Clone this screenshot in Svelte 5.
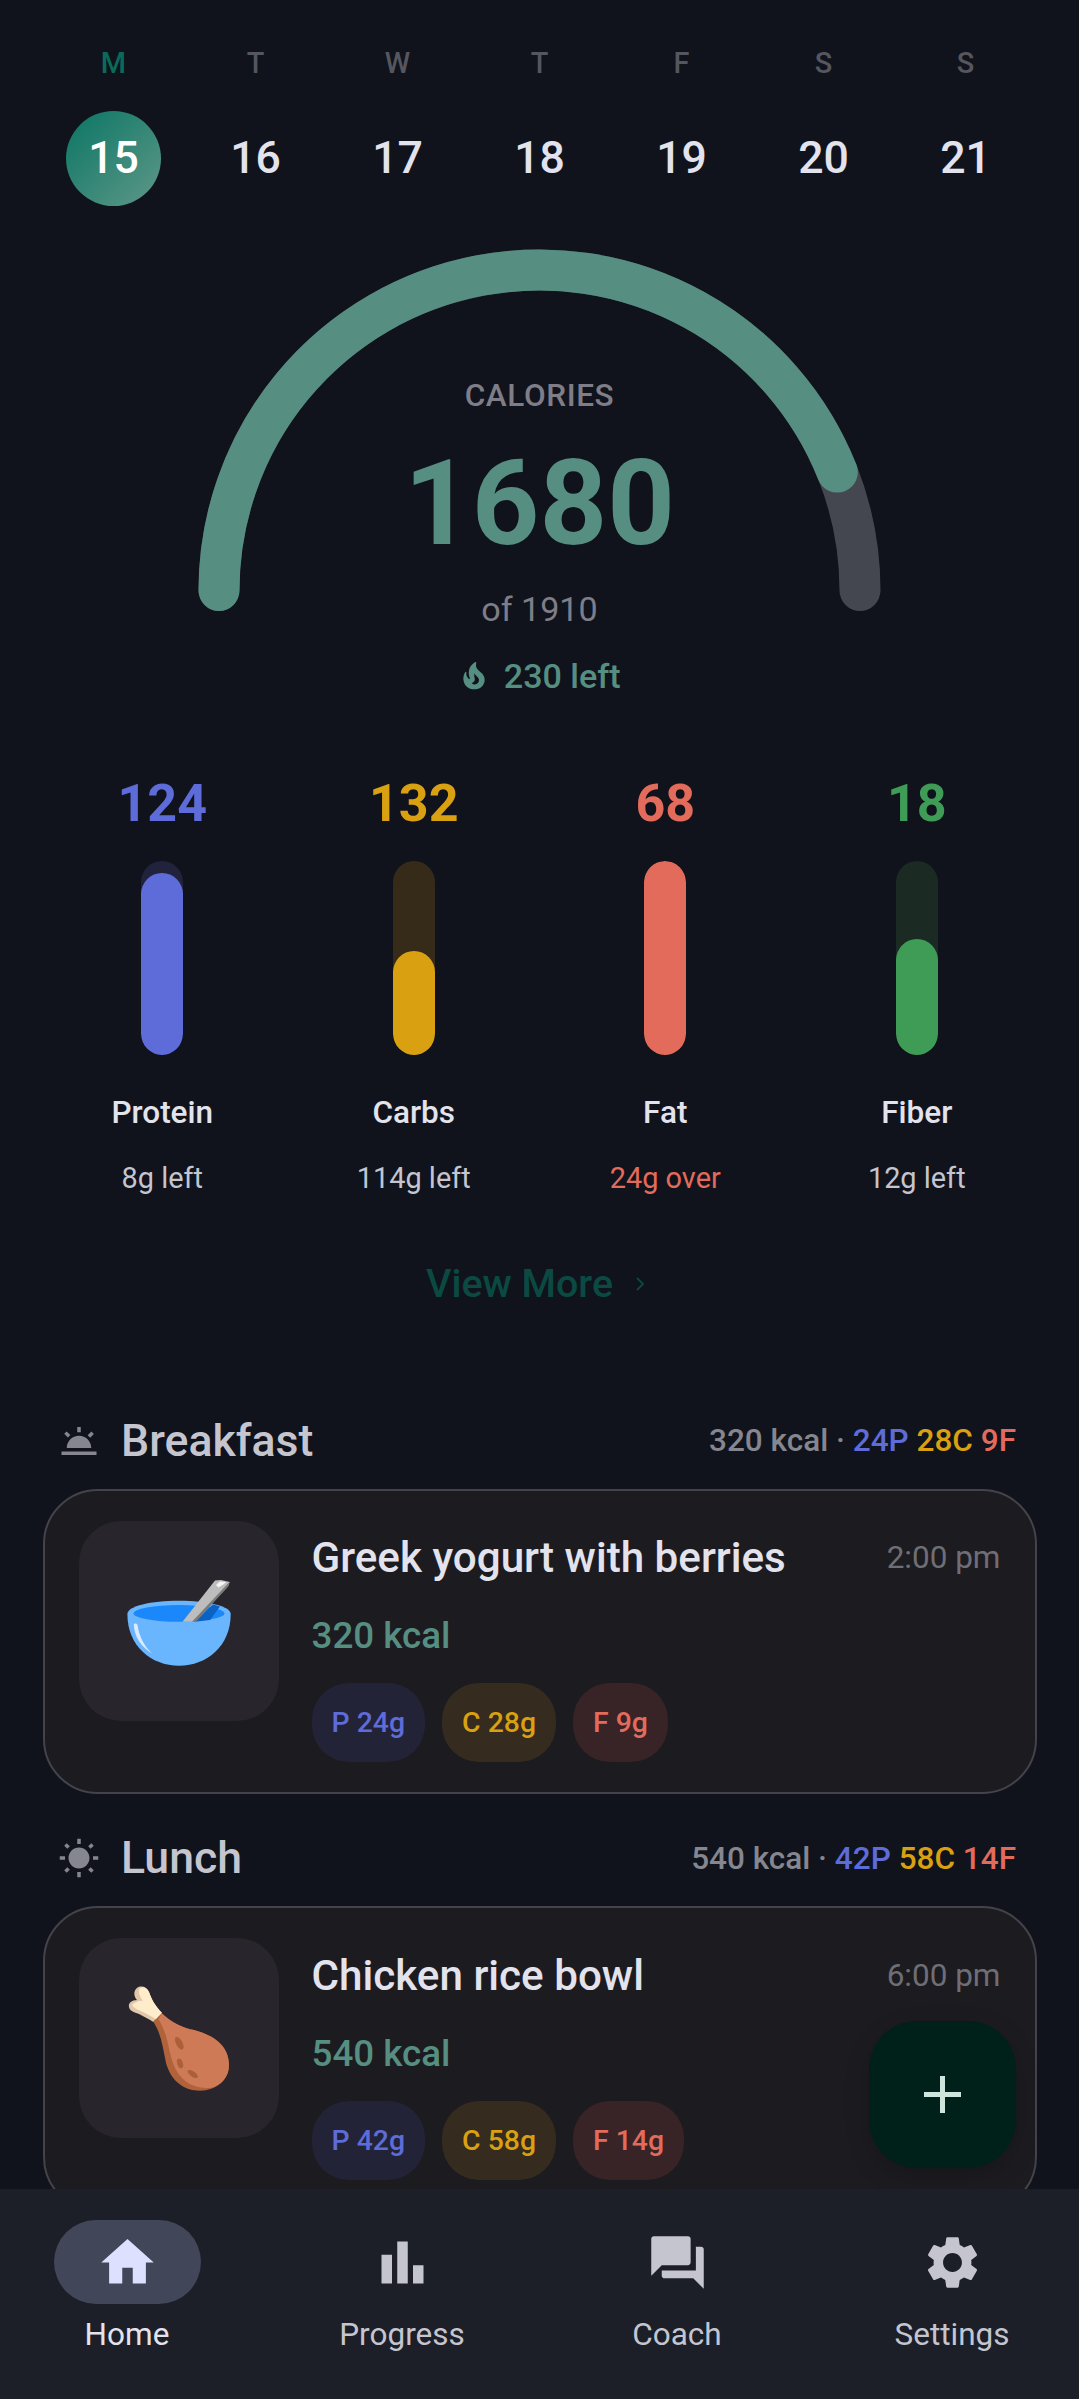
<script lang="ts">
	const days = [
		{ label: 'M', num: 15, today: true },
		{ label: 'T', num: 16 },
		{ label: 'W', num: 17 },
		{ label: 'T', num: 18 },
		{ label: 'F', num: 19 },
		{ label: 'S', num: 20 },
		{ label: 'S', num: 21 }
	];

	const macros = [
		{ key: 'protein', value: 124, name: 'Protein', note: '8g left', fill: 94 },
		{ key: 'carbs', value: 132, name: 'Carbs', note: '114g left', fill: 53.6 },
		{ key: 'fat', value: 68, name: 'Fat', note: '24g over', fill: 100, over: true },
		{ key: 'fiber', value: 18, name: 'Fiber', note: '12g left', fill: 60 }
	];

	const meals = [
		{
			slot: 'Breakfast',
			kcal: 320,
			p: 24,
			c: 28,
			f: 9,
			title: 'Greek yogurt with berries',
			time: '2:00 pm',
			icon: 'bowl'
		},
		{
			slot: 'Lunch',
			kcal: 540,
			p: 42,
			c: 58,
			f: 14,
			title: 'Chicken rice bowl',
			time: '6:00 pm',
			icon: 'leg'
		}
	];

	const tabs = [
		{ name: 'Home', active: true, d: 'M10 20v-6h4v6h5v-8h3L12 3 2 12h3v8z' },
		{ name: 'Progress', d: 'M4 9h4v11H4zm12 4h4v7h-4zm-6-9h4v16h-4z' },
		{
			name: 'Coach',
			d: 'M21 6h-2v9H6v2c0 .55.45 1 1 1h11l4 4V7c0-.55-.45-1-1-1zm-4 6V3c0-.55-.45-1-1-1H3c-.55 0-1 .45-1 1v14l4-4h10c.55 0 1-.45 1-1z'
		},
		{
			name: 'Settings',
			d: 'M19.14 12.94c.04-.3.06-.61.06-.94 0-.32-.02-.64-.07-.94l2.03-1.58c.18-.14.23-.41.12-.61l-1.92-3.32c-.12-.22-.37-.29-.59-.22l-2.39.96c-.5-.38-1.03-.7-1.62-.94l-.36-2.54c-.04-.24-.24-.41-.48-.41h-3.84c-.24 0-.43.17-.47.41l-.36 2.54c-.59.24-1.13.57-1.62.94l-2.39-.96c-.22-.08-.47 0-.59.22L2.74 8.87c-.12.21-.08.47.12.61l2.03 1.58c-.05.3-.09.63-.09.94s.02.64.07.94l-2.03 1.58c-.18.14-.23.41-.12.61l1.92 3.32c.12.22.37.29.59.22l2.39-.96c.5.38 1.03.7 1.62.94l.36 2.54c.05.24.24.41.48.41h3.84c.24 0 .44-.17.47-.41l.36-2.54c.59-.24 1.13-.56 1.62-.94l2.39.96c.22.08.47 0 .59-.22l1.92-3.32c.12-.22.07-.47-.12-.61l-2.01-1.58zM12 15.6c-1.98 0-3.6-1.62-3.6-3.6s1.62-3.6 3.6-3.6 3.6 1.62 3.6 3.6-1.62 3.6-3.6 3.6z'
		}
	];

	// gauge: half circle, progress share of 180deg
	const r = 320.5;
	const cx = 341.5;
	const cy = 341.5;
	const angle = Math.PI * (1 - 1680 / 1910);
	const endX = cx + r * Math.cos(angle);
	const endY = cy - r * Math.sin(angle);
</script>

<div class="screen">
	<main class="scroll">
		<div class="days">
			{#each days as day}
				<div class="day">
					<span class="day-label" class:today={day.today}>{day.label}</span>
					<span class="day-num" class:today={day.today}>{day.num}</span>
				</div>
			{/each}
		</div>

		<section class="gauge">
			<svg class="arc" width="683" height="363" viewBox="0 0 683 363" aria-hidden="true">
				<path
					d="M{cx - r} {cy} A{r} {r} 0 0 1 {cx + r} {cy}"
					fill="none"
					stroke="#44474f"
					stroke-width="41"
					stroke-linecap="round"
				/>
				<path
					d="M{cx - r} {cy} A{r} {r} 0 0 1 {endX} {endY}"
					fill="none"
					stroke="#568f82"
					stroke-width="41"
					stroke-linecap="round"
				/>
			</svg>
			<div class="gauge-text">
				<span class="cal-label">CALORIES</span>
				<span class="cal-value">1680</span>
				<span class="cal-of">of 1910</span>
				<span class="cal-left">
					<svg width="32" height="32" viewBox="0 0 24 24" aria-hidden="true">
						<path
							fill-rule="evenodd"
							d="M19.48 12.35c-1.57-4.08-7.16-4.3-5.81-10.23.1-.44-.37-.78-.75-.55C9.29 3.71 6.68 8 8.87 13.62c.18.46-.36.89-.75.59-1.81-1.37-2-3.34-1.84-4.75.06-.52-.62-.77-.91-.34C4.69 10.16 4 11.84 4 14.37c.38 5.6 5.11 7.32 6.81 7.54 2.43.31 5.06-.14 6.95-1.87 2.08-1.93 2.84-5.01 1.72-7.69zM10.2 17.38c1.44-.35 2.18-1.39 2.38-2.31.33-1.43-.96-2.83-.09-5.09.33 1.87 3.27 3.04 3.27 5.08.08 2.53-2.66 4.7-5.56 2.32z"
						/>
					</svg>
					230 left
				</span>
			</div>
		</section>

		<section class="macros">
			{#each macros as m}
				<div class="macro {m.key}">
					<span class="macro-value">{m.value}</span>
					<div class="bar">
						<div class="bar-fill" style="height: {m.fill}%"></div>
					</div>
					<span class="macro-name">{m.name}</span>
					<span class="macro-note" class:over={m.over}>{m.note}</span>
				</div>
			{/each}
		</section>

		<div class="view-more">
			View More
			<svg width="10" height="16" viewBox="0 0 10 16" aria-hidden="true">
				<path d="M2 2l6 6-6 6" fill="none" stroke="currentColor" stroke-width="1.8" />
			</svg>
		</div>

		{#each meals as meal}
			<header class="meal-head">
				<div class="slot">
					{#if meal.icon === 'bowl'}
						<svg class="slot-icon" viewBox="0 0 24 24" aria-hidden="true">
							<path
								d="M16.955 8.662l2.12-2.122 1.416 1.414-2.121 2.122zM2 18h20v2H2zM11 4h2v3h-2zM3.543 7.925l1.414-1.414 2.121 2.121-1.414 1.414zM5 16h14c0-3.87-3.13-7-7-7s-7 3.13-7 7z"
							/>
						</svg>
					{:else}
						<svg class="slot-icon" viewBox="0 0 24 24" aria-hidden="true">
							<path
								d="M6.76 5.34l-1.8-1.79-1.41 1.41 1.79 1.79 1.42-1.41zM4 11H1v2h3v-2zm9-10h-2v3h2V1zm7.45 3.96l-1.41-1.41-1.79 1.79 1.41 1.41 1.79-1.79zM17.24 18.66l1.79 1.8 1.41-1.41-1.8-1.79-1.4 1.4zM20 11v2h3v-2h-3zm-8-5c-3.31 0-6 2.69-6 6s2.69 6 6 6 6-2.69 6-6-2.69-6-6-6zm-1 17h2v-3h-2v3zm-7.45-3.96l1.41 1.41 1.79-1.8-1.41-1.41-1.79 1.8z"
							/>
						</svg>
					{/if}
					<h2>{meal.slot}</h2>
				</div>
				<p class="summary">
					{meal.kcal} kcal ·
					<span class="c-protein">{meal.p}P</span>
					<span class="c-carbs">{meal.c}C</span>
					<span class="c-fat">{meal.f}F</span>
				</p>
			</header>

			<article class="card">
				<div class="thumb">
					{#if meal.icon === 'bowl'}
						<svg width="200" height="200" viewBox="0 0 200 200" aria-hidden="true">
							<path
								d="M48.4 93C48.4 125 72 144.7 100 144.7S151.7 125 151.7 93C151.7 85 128 79.7 100 79.7S48.4 85 48.4 93Z"
								fill="#69b6fe"
							/>
							<ellipse cx="100" cy="92.4" rx="45.5" ry="8.4" fill="#1a87fa" />
							<path d="M115.6 100.7L134 83.6 141 85.5 131 99Z" fill="#0a62c4" />
							<path d="M103.5 100.7L136 59.5 142 59 150.7 61 149 65.5 115.6 100.7Z" fill="#bdbdbd" />
							<path d="M149 62.5L150.7 61 149 65.5 117 100.7 113 100.7Z" fill="#7a7a7a" />
							<path d="M137 64L141 60.5 147 61 145 63 139.5 66.5Z" fill="#f5f5f5" />
							<path d="M54.8 103C56 102 58 102.5 58.5 104C60 115 65 125 73 132.5 62 126 55 115 54.8 103Z" fill="#d9ecff" />
						</svg>
					{:else}
						<svg width="200" height="200" viewBox="0 0 200 200" aria-hidden="true">
							<path
								d="M83 75C76 68 72 60 70 54C68 49 62 47 58 50C54 53 55 59 58 62C53 62 49 65 50 69C50.5 73 55 74 60 76C64 78 70 81 74.3 84Z"
								fill="#e2c7ab"
							/>
							<path
								d="M83 75C76 68 72 60 70 54C68 49 63 48 60.5 51C59 54 61 59 64 63C61 62 56 64 53 67C54 70 60 72 64 74C68 76 74 79 78 82Z"
								fill="#ffecca"
							/>
							<path
								d="M82.7 75.3C92 84 100 88 111 91.3C130 95 150 105 150 127C150 142 137 152.7 121 152.7C105 152.7 92 143 87 125C84 110 82 95 74.3 83.7Z"
								fill="#b0623a"
							/>
							<path
								d="M82.7 75.3C92 84 100 88 111 91.3C130 95 150 105 150 127C150 139 142 148 131 150C118 151 105 146 97 132C91 120 90 108 87 98C85 92 83 87 79.5 81.5Z"
								fill="#cf7a56"
							/>
							<ellipse cx="100.3" cy="105.3" rx="7" ry="3.2" transform="rotate(62 100.3 105.3)" fill="#ac6037" />
							<ellipse cx="101" cy="125.3" rx="5" ry="2.8" transform="rotate(72 101 125.3)" fill="#ac6037" />
							<ellipse cx="113.7" cy="136" rx="6" ry="2.6" transform="rotate(35 113.7 136)" fill="#ac6037" />
						</svg>
					{/if}
				</div>
				<div class="body">
					<div class="title-row">
						<h3>{meal.title}</h3>
						<span class="time">{meal.time}</span>
					</div>
					<div class="kcal">{meal.kcal} kcal</div>
					<div class="chips">
						<span class="chip protein">P {meal.p}g</span>
						<span class="chip carbs">C {meal.c}g</span>
						<span class="chip fat">F {meal.f}g</span>
					</div>
				</div>
			</article>
		{/each}
	</main>

	<button class="fab" aria-label="Add">
		<svg width="37" height="37" viewBox="0 0 37 37" aria-hidden="true">
			<path d="M16 0h5v16h16v5H21v16h-5V21H0v-5h16z" fill="#cfe5dc" />
		</svg>
	</button>

	<nav class="nav">
		{#each tabs as tab}
			<div class="tab" class:active={tab.active}>
				<span class="pill">
					<svg width="63" height="63" viewBox="0 0 24 24" aria-hidden="true">
						<path d={tab.d} />
					</svg>
				</span>
				<span class="tab-name">{tab.name}</span>
			</div>
		{/each}
	</nav>
</div>

<style>
	:global(body) {
		background: #10131b;
	}

	.screen {
		position: relative;
		display: flex;
		flex-direction: column;
		width: 1079px;
		height: 2399px;
		overflow: hidden;
		background: #10131b;
		font-family: Roboto, sans-serif;
		color: #e3e3ee;
	}

	.scroll {
		flex: 1;
		min-height: 0;
		overflow: hidden;
	}

	/* week strip */
	.days {
		display: grid;
		grid-template-columns: repeat(7, 142px);
		padding: 44px 42.5px 0;
	}

	.day {
		display: flex;
		flex-direction: column;
		align-items: center;
	}

	.day-label {
		font-size: 28.9px;
		line-height: 38px;
		font-weight: 500;
		color: #55565f;
	}

	.day-label.today {
		color: #0a6b5a;
	}

	.day-num {
		display: flex;
		align-items: center;
		justify-content: center;
		box-sizing: border-box;
		width: 95px;
		height: 95px;
		margin-top: 29px;
		padding-bottom: 2px;
		border-radius: 50%;
		font-size: 44.6px;
		font-weight: 500;
	}

	.day-num.today {
		background: linear-gradient(135deg, #0a7563, #5f9889);
		color: #fff;
	}

	/* calorie gauge */
	.gauge {
		display: grid;
		justify-items: center;
		margin-top: 43px;
	}

	.gauge > * {
		grid-area: 1 / 1;
	}

	.gauge-text {
		display: flex;
		flex-direction: column;
		align-items: center;
		padding-top: 127px;
	}

	.cal-label {
		font-size: 31.5px;
		line-height: 40px;
		font-weight: 500;
		letter-spacing: 0.6px;
		color: #7f7e88;
	}

	.cal-value {
		margin-top: 22.5px;
		font-size: 118px;
		line-height: 130px;
		font-weight: 700;
		color: #568f82;
	}

	.cal-of {
		margin-top: 20px;
		font-size: 34.1px;
		line-height: 40px;
		color: #7f7e88;
	}

	.cal-left {
		display: flex;
		align-items: center;
		gap: 13.5px;
		margin-top: 27.5px;
		font-size: 34.1px;
		line-height: 40px;
		font-weight: 500;
		color: #568f82;
	}

	.cal-left svg {
		fill: currentColor;
	}

	/* macro bars */
	.macros {
		display: grid;
		grid-template-columns: repeat(4, 251.5px);
		padding: 0 36.5px;
		margin-top: 77.5px;
	}

	.macro {
		display: flex;
		flex-direction: column;
		align-items: center;
	}

	.macro-value {
		font-size: 52px;
		line-height: 60px;
		font-weight: 700;
		color: var(--tint);
	}

	.bar {
		position: relative;
		width: 42px;
		height: 194px;
		margin-top: 27.5px;
		border-radius: 21px;
		overflow: hidden;
		background: var(--track);
	}

	.bar-fill {
		position: absolute;
		left: 0;
		right: 0;
		bottom: 0;
		border-radius: 21px;
		background: var(--tint);
	}

	.macro-name {
		margin-top: 38px;
		font-size: 31.5px;
		line-height: 40px;
		font-weight: 500;
	}

	.macro-note {
		margin-top: 27px;
		font-size: 28.9px;
		line-height: 36px;
		color: #c5c5d0;
	}

	.macro-note.over {
		color: #e36b5b;
	}

	.protein {
		--tint: #5d6cd9;
		--track: #20233b;
	}

	.carbs {
		--tint: #d9a012;
		--track: #352b18;
	}

	.fat {
		--tint: #e36b5b;
		--track: #3a2420;
	}

	.fiber {
		--tint: #3e9c56;
		--track: #1b2a22;
	}

	.view-more {
		display: flex;
		align-items: center;
		justify-content: center;
		gap: 22px;
		margin-top: 63.5px;
		padding-right: 8px;
		font-size: 39.4px;
		line-height: 48px;
		font-weight: 500;
		color: #0b4a42;
	}

	/* meals */
	.meal-head {
		display: flex;
		align-items: center;
		justify-content: space-between;
		height: 56px;
		margin-top: 36px;
		padding: 0 63px 0 58px;
	}

	.view-more + .meal-head {
		margin-top: 105px;
	}

	.slot {
		display: flex;
		align-items: center;
		gap: 21px;
	}

	.slot-icon {
		width: 42px;
		height: 42px;
		fill: #85868f;
	}

	.slot h2 {
		margin: 0;
		font-size: 44.6px;
		line-height: 56px;
		font-weight: 500;
		color: #c5c5d0;
	}

	.summary {
		margin: 0;
		font-size: 31.5px;
		font-weight: 500;
		color: #85868f;
	}

	.c-protein {
		color: #5d6cd9;
	}

	.c-carbs {
		color: #d9a012;
	}

	.c-fat {
		color: #e36b5b;
	}

	.card {
		display: flex;
		gap: 33px;
		margin: 19px 42.5px 0;
		padding: 30px 34px 30px;
		border: 2px solid #44424a;
		border-radius: 55px;
		background: #1c1b1f;
	}

	.meal-head + .card {
		margin-top: 20px;
	}

	.thumb {
		flex: none;
		width: 200px;
		height: 200px;
		border-radius: 42px;
		background: #28262c;
	}

	.thumb svg {
		display: block;
	}

	.body {
		flex: 1;
		min-width: 0;
		padding-top: 9.7px;
	}

	.title-row {
		display: flex;
		align-items: center;
		justify-content: space-between;
	}

	.title-row h3 {
		margin: 0;
		font-size: 42.2px;
		line-height: 56px;
		font-weight: 500;
	}

	.time {
		font-size: 31.5px;
		line-height: 56px;
		color: #6f6e76;
	}

	.kcal {
		margin-top: 25.7px;
		font-size: 36.75px;
		line-height: 48px;
		font-weight: 500;
		color: #568f82;
	}

	.chips {
		display: flex;
		gap: 17px;
		margin-top: 23.5px;
	}

	.chip {
		display: flex;
		align-items: center;
		height: 79px;
		padding: 0 20px;
		border-radius: 37px;
		font-size: 28.4px;
		font-weight: 500;
		color: var(--tint);
	}

	.chip.protein {
		background: #232338;
		--tint: #5d6cd9;
	}

	.chip.carbs {
		background: #352b1e;
		--tint: #d9a012;
	}

	.chip.fat {
		background: #382426;
		--tint: #e36b5b;
	}

	.fab {
		position: absolute;
		right: 63px;
		bottom: 231px;
		display: flex;
		align-items: center;
		justify-content: center;
		width: 147px;
		height: 147px;
		padding: 0;
		border: none;
		border-radius: 48px;
		background: #00201a;
		box-shadow: 0 8px 24px rgba(0, 0, 0, 0.18);
	}

	/* bottom nav */
	.nav {
		position: relative;
		flex: none;
		display: flex;
		justify-content: space-between;
		height: 210.5px;
		box-sizing: border-box;
		padding: 31.5px 53.5px 0;
		background: #1c1f27;
	}

	.tab {
		display: flex;
		flex-direction: column;
		align-items: center;
		width: 147px;
	}

	.pill {
		display: flex;
		align-items: center;
		justify-content: center;
		width: 147px;
		height: 84px;
		border-radius: 42px;
	}

	.pill svg {
		fill: #c5c5d0;
	}

	.tab-name {
		margin-top: 10px;
		font-size: 31.5px;
		line-height: 42px;
		font-weight: 400;
		color: #c5c5d0;
		white-space: nowrap;
	}

	.tab.active .pill {
		background: #414659;
	}

	.tab.active .pill svg {
		fill: #dde1ff;
	}

	.tab.active .tab-name {
		color: #e3e3ee;
	}
</style>
